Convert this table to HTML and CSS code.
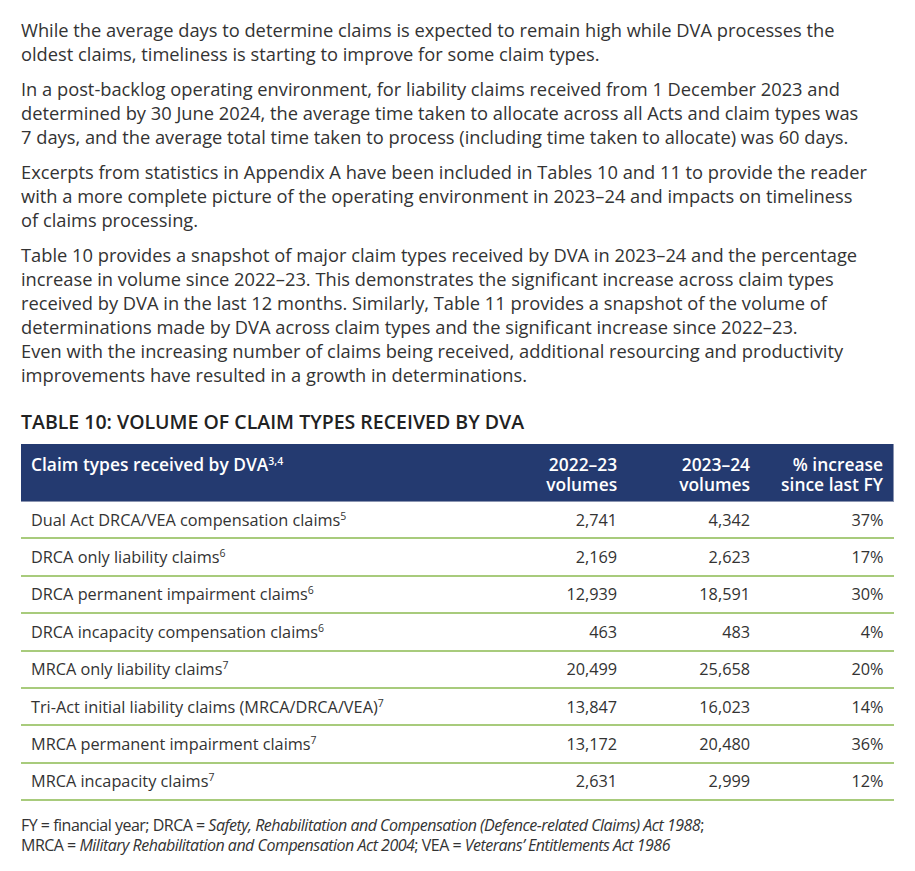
FILE: index.html
```html
<!DOCTYPE html>
<html lang="en">
<head>
<meta charset="utf-8">
<title>Table 10</title>
<link rel="stylesheet" href="styles.css">
</head>
<body>
<main class="page">
  <div class="intro">
    <p class="para">While the average days to determine claims is expected to remain high while DVA processes the oldest claims, timeliness is starting to improve for some claim types.</p>
    <p class="para">In a post-backlog operating environment, for liability claims received from 1 December 2023 and determined by 30 June 2024, the average time taken to allocate across all Acts and claim types was 7 days, and the average total time taken to process (including time taken to allocate) was 60 days.</p>
    <p class="para">Excerpts from statistics in Appendix A have been included in Tables 10 and 11 to provide the reader with a more complete picture of the operating environment in 2023–24 and impacts on timeliness of claims processing.</p>
    <p class="para">Table 10 provides a snapshot of major claim types received by DVA in 2023–24 and the percentage increase in volume since 2022–23. This demonstrates the significant increase across claim types received by DVA in the last 12 months. Similarly, Table 11 provides a snapshot of the volume of determinations made by DVA across claim types and the significant increase since 2022–23.<br>Even with the increasing number of claims being received, additional resourcing and productivity improvements have resulted in a growth in determinations.</p>
  </div>

  <h2 class="table-title">TABLE 10: VOLUME OF CLAIM TYPES RECEIVED BY DVA</h2>
  <table class="data">
    <thead>
      <tr>
        <th class="c-name">Claim types received by DVA<sup>3,4</sup></th>
        <th class="c-num">2022–23<br>volumes</th>
        <th class="c-num">2023–24<br>volumes</th>
        <th class="c-num">% increase<br>since last FY</th>
      </tr>
    </thead>
    <tbody>
      <tr><td>Dual Act DRCA/VEA compensation claims<sup>5</sup></td><td class="n">2,741</td><td class="n">4,342</td><td class="n">37%</td></tr>
      <tr><td>DRCA only liability claims<sup>6</sup></td><td class="n">2,169</td><td class="n">2,623</td><td class="n">17%</td></tr>
      <tr><td>DRCA permanent impairment claims<sup>6</sup></td><td class="n">12,939</td><td class="n">18,591</td><td class="n">30%</td></tr>
      <tr><td>DRCA incapacity compensation claims<sup>6</sup></td><td class="n">463</td><td class="n">483</td><td class="n">4%</td></tr>
      <tr><td>MRCA only liability claims<sup>7</sup></td><td class="n">20,499</td><td class="n">25,658</td><td class="n">20%</td></tr>
      <tr><td>Tri-Act initial liability claims (MRCA/DRCA/VEA)<sup>7</sup></td><td class="n">13,847</td><td class="n">16,023</td><td class="n">14%</td></tr>
      <tr><td>MRCA permanent impairment claims<sup>7</sup></td><td class="n">13,172</td><td class="n">20,480</td><td class="n">36%</td></tr>
      <tr><td>MRCA incapacity claims<sup>7</sup></td><td class="n">2,631</td><td class="n">2,999</td><td class="n">12%</td></tr>
    </tbody>
  </table>
  <p class="note">FY = financial year; DRCA = <em>Safety, Rehabilitation and Compensation (Defence-related Claims) Act 1988</em>;<br>MRCA = <em>Military Rehabilitation and Compensation Act 2004</em>; VEA = <em>Veterans’ Entitlements Act 1986</em></p>
</main>
</body>
</html>
```

FILE: styles.css
```css
html, body {
  margin: 0;
  padding: 0;
  background: #ffffff;
}

.page {
  padding: 18px 21px 0 21px;
  width: 873px;
  font-family: "Open Sans", "Liberation Sans", sans-serif;
  color: #333333;
}

.intro {
  width: 850px;
}

.para {
  margin: 0 0 11px 0;
  font-size: 18.3px;
  line-height: 24px;
}

.table-title {
  margin: 22px 0 9px 0;
  font-size: 19.5px;
  line-height: 26px;
  font-weight: 600;
  color: #222222;
}

.data {
  width: 873px;
  border-collapse: collapse;
  font-size: 16.3px;
}

.data th {
  background: #243a70;
  color: #ffffff;
  font-size: 17.4px;
  font-weight: 600;
  line-height: 20px;
  padding: 10px 10px 7px 10px;
  vertical-align: top;
  border-bottom: 1px solid #8a94b0;
}

.data th:last-child {
  border-right: 1px solid #8a94b0;
}

.data th.c-name {
  text-align: left;
  width: 454px;
}

.data th.c-num {
  text-align: right;
  width: 113px;
}

.data sup {
  font-size: 10.5px;
  line-height: 0;
  vertical-align: 6px;
}

.data td {
  padding: 7.7px 10px;
  line-height: 20px;
  border-bottom: 2px solid #a8cb7c;
  color: #333333;
}

.data td.n {
  text-align: right;
}

.note {
  margin: 14px 0 0 0;
  font-size: 16px;
  line-height: 20px;
  letter-spacing: -0.5px;
  color: #333333;
}
```
